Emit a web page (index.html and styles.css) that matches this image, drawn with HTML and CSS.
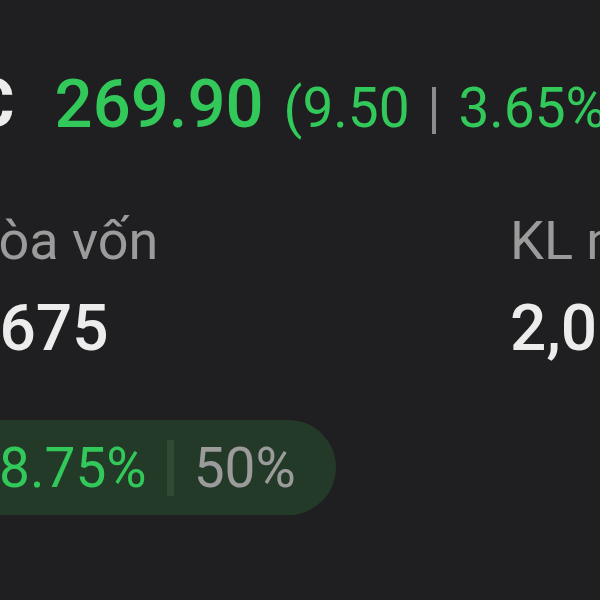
FILE: index.html
```html
<!DOCTYPE html>
<html lang="vi">
<head>
  <meta charset="UTF-8">
  <meta name="viewport" content="width=device-width, initial-scale=1.0">
  <title>Chi tiết mã</title>
  <link rel="stylesheet" href="styles.css">
</head>
<body>

  <div class="screen">
    <!-- Giá hiện tại -->
    <div class="quote-row">
      <span class="ticker">ABC</span>
      <span class="price">269.90</span>
      <span class="change">(9.50 <span class="divider">|</span> 3.65%)</span>
    </div>

    <!-- Thông số -->
    <div class="stats">
      <div class="stat stat-break-even">
        <span class="stat-label">Giá hòa vốn</span>
        <span class="stat-value">262,675</span>
      </div>
      <div class="stat stat-volume">
        <span class="stat-label">KL mua</span>
        <span class="stat-value">2,000</span>
      </div>
    </div>

    <!-- Lãi / lỗ -->
    <div class="profit-pill">
      <span class="profit-value">+18.75%</span>
      <span class="pill-divider"></span>
      <span class="profit-ratio">50%</span>
    </div>
  </div>

</body>
</html>
```

FILE: styles.css
```css
/* Reset */
* {
  margin: 0;
  padding: 0;
  box-sizing: border-box;
}

body {
  width: 600px;
  height: 600px;
  overflow: hidden;
  font-family: Roboto, "Noto Sans", sans-serif;
  background: #1f1f21;
  color: #ececec;
}

.screen {
  padding-top: 66px;
  white-space: nowrap;
}

/* Header price line */
.quote-row {
  display: flex;
  align-items: baseline;
  height: 76px;
  line-height: 76px;
}

.ticker {
  margin-left: -119px;
  margin-right: 40px;
  font-size: 68px;
  font-weight: 700;
  color: #ececec;
}

.price {
  margin-right: 20px;
  font-size: 67px;
  font-weight: 500;
  color: #32c85a;
}

.change {
  font-size: 55px;
  font-weight: 400;
  color: #32c85a;
}

.divider {
  color: #8c8c8c;
  padding: 0 4px;
}

/* Stats */
.stats {
  display: flex;
  margin-top: 64px;
  margin-left: -124px;
}

.stat {
  display: flex;
  flex-direction: column;
  flex-shrink: 0;
}

.stat-break-even {
  width: 634px;
}

.stat-label {
  font-size: 54px;
  line-height: 70px;
  color: #9b9b9b;
}

.stat-value {
  margin-top: 20px;
  font-size: 64px;
  font-weight: 500;
  line-height: 66px;
  color: #ececec;
}

/* Profit pill */
.profit-pill {
  display: inline-flex;
  align-items: center;
  height: 95px;
  margin-top: 58px;
  margin-left: -123px;
  padding: 0 40px 0 60px;
  background: #243a29;
  border-radius: 0 48px 48px 0;
  font-size: 55px;
}

.profit-value {
  color: #32c85a;
}

.pill-divider {
  width: 7px;
  height: 56px;
  margin: 0 20px;
  background: #2f4a35;
}

.profit-ratio {
  color: #9b9b9b;
}
```
